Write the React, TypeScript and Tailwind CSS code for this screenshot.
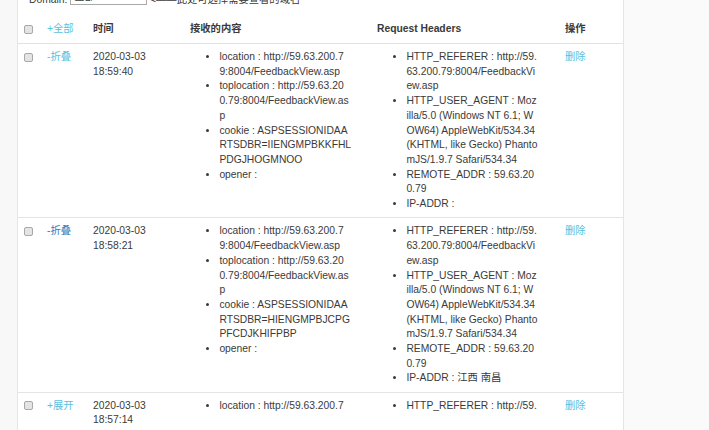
import React from "react";

type Entry = {
  id: number;
  open: boolean;
  toggleClass: string;
  date: string;
  time: string;
  content: string[][];
  headers: string[][];
};

const font = "font-['Liberation_Sans','Noto_Sans_CJK_SC',sans-serif]";

const entries: Entry[] = [
  {
    id: 1,
    open: true,
    toggleClass: "text-[#5bc0de]",
    date: "2020-03-03",
    time: "18:59:40",
    content: [
      ["location : http://59.63.200.7", "9:8004/FeedbackView.asp"],
      ["toplocation : http://59.63.20", "0.79:8004/FeedbackView.as", "p"],
      ["cookie : ASPSESSIONIDAA", "RTSDBR=IIENGMPBKKFHL", "PDGJHOGMNOO"],
      ["opener :"],
    ],
    headers: [
      ["HTTP_REFERER : http://59.", "63.200.79:8004/FeedbackVi", "ew.asp"],
      [
        "HTTP_USER_AGENT : Moz",
        "illa/5.0 (Windows NT 6.1; W",
        "OW64) AppleWebKit/534.34",
        "(KHTML, like Gecko) Phanto",
        "mJS/1.9.7 Safari/534.34",
      ],
      ["REMOTE_ADDR : 59.63.20", "0.79"],
      ["IP-ADDR :"],
    ],
  },
  {
    id: 2,
    open: true,
    toggleClass: "text-[#337ab7]",
    date: "2020-03-03",
    time: "18:58:21",
    content: [
      ["location : http://59.63.200.7", "9:8004/FeedbackView.asp"],
      ["toplocation : http://59.63.20", "0.79:8004/FeedbackView.as", "p"],
      ["cookie : ASPSESSIONIDAA", "RTSDBR=HIENGMPBJCPG", "PFCDJKHIFPBP"],
      ["opener :"],
    ],
    headers: [
      ["HTTP_REFERER : http://59.", "63.200.79:8004/FeedbackVi", "ew.asp"],
      [
        "HTTP_USER_AGENT : Moz",
        "illa/5.0 (Windows NT 6.1; W",
        "OW64) AppleWebKit/534.34",
        "(KHTML, like Gecko) Phanto",
        "mJS/1.9.7 Safari/534.34",
      ],
      ["REMOTE_ADDR : 59.63.20", "0.79"],
      ["IP-ADDR : 江西 南昌"],
    ],
  },
  {
    id: 3,
    open: false,
    toggleClass: "text-[#5bc0de]",
    date: "2020-03-03",
    time: "18:57:14",
    content: [
      ["location : http://59.63.200.7", "9:8004/FeedbackView.asp"],
      ["toplocation : http://59.63.20", "0.79:8004/FeedbackView.as", "p"],
    ],
    headers: [
      ["HTTP_REFERER : http://59.", "63.200.79:8004/FeedbackVi", "ew.asp"],
      ["REMOTE_ADDR : 59.63.20", "0.79"],
    ],
  },
];

const cols = "grid grid-cols-[23px_46px_97px_187px_188px_63px]";
const cell = "px-[6px] pb-[5.5px] pt-[6.1px]";

function Check() {
  return (
    <span className="mt-[2.5px] block h-[9px] w-[9px] rounded-[2px] border border-[#a8a8a8] bg-[#e4e4e4]" />
  );
}

// Collapsed rows only show the first line of each list.
function Lines({ items, open }: { items: string[][]; open: boolean }) {
  return (
    <ul className={`list-disc pl-[29.4px] ${open ? "" : "h-[14.7px] overflow-hidden"}`}>
      {items.map((lines, i) => (
        <li key={i}>
          {lines.map((l, j) => (
            <span key={j} className="block whitespace-nowrap">
              {l}
            </span>
          ))}
        </li>
      ))}
    </ul>
  );
}

export default function App() {
  return (
    <div
      className={`${font} flex min-h-screen overflow-hidden bg-[#f8f8f8] text-[10.3px] leading-[14.7px] text-[#3a3a3a]`}
    >
      <div className="w-[18px] shrink-0 border-r border-[#e6e6e6]" />
      <div className="w-[606px] shrink-0 border-r-[1.5px] border-[#e5e5e5] bg-white">
        <div className="-mt-[10px] flex h-[20px] items-end pl-[11px]">
          <span className="mb-[2.6px]">Domain:&nbsp;</span>
          <span className="mb-[5.5px] flex h-[15px] w-[77px] items-center border border-[#a9a9a9] bg-white pl-[3px]">
            全部
          </span>
          <span className="mb-[2.6px]">&nbsp;&lt;——此处可选择需要查看的域名</span>
        </div>

        <div className={`${cols} mt-[6.5px] border-b-[1.5px] border-[#e2e2e2] font-bold`}>
          <div className="px-[6px] py-[5.9px]">
            <Check />
          </div>
          <div className="px-[6px] py-[5.9px] font-normal text-[#5bc0de]">+全部</div>
          <div className="px-[6px] py-[5.9px]">时间</div>
          <div className="px-[6px] py-[5.9px]">接收的内容</div>
          <div className="px-[6px] py-[5.9px]">Request Headers</div>
          <div className="px-[6px] py-[5.9px]">操作</div>
        </div>

        {entries.map((e) => (
          <div key={e.id} className={`${cols} border-b border-[#e4e4e4]`}>
            <div className={cell}>
              <Check />
            </div>
            <div className={`${cell} ${e.toggleClass}`}>{e.open ? "-折叠" : "+展开"}</div>
            <div className={cell}>
              <span className="block">{e.date}</span>
              <span className="block">{e.time}</span>
            </div>
            <div className={cell}>
              <Lines items={e.content} open={e.open} />
            </div>
            <div className={cell}>
              <Lines items={e.headers} open={e.open} />
            </div>
            <div className={`${cell} text-[#5bc0de]`}>删除</div>
          </div>
        ))}
      </div>
      <div className="flex-1 bg-[#fafafa]" />
    </div>
  );
}
